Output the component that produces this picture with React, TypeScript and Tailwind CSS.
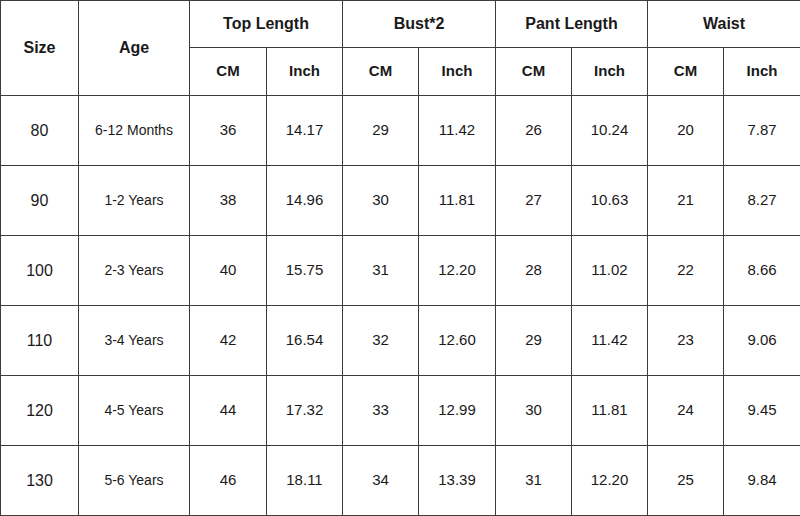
const rows = [
  { size: "80", age: "6-12 Months", vals: ["36", "14.17", "29", "11.42", "26", "10.24", "20", "7.87"] },
  { size: "90", age: "1-2 Years", vals: ["38", "14.96", "30", "11.81", "27", "10.63", "21", "8.27"] },
  { size: "100", age: "2-3 Years", vals: ["40", "15.75", "31", "12.20", "28", "11.02", "22", "8.66"] },
  { size: "110", age: "3-4 Years", vals: ["42", "16.54", "32", "12.60", "29", "11.42", "23", "9.06"] },
  { size: "120", age: "4-5 Years", vals: ["44", "17.32", "33", "12.99", "30", "11.81", "24", "9.45"] },
  { size: "130", age: "5-6 Years", vals: ["46", "18.11", "34", "13.39", "31", "12.20", "25", "9.84"] },
];

const groups = ["Top Length", "Bust*2", "Pant Length", "Waist"];
const widths = [78, 111, 77, 76, 76, 77, 76, 76, 76, 77];

const cell = "border border-[#3c3c3c] text-center align-middle p-0";

export default function App() {
  return (
    <div className="w-[800px] h-[516px] bg-white text-[#1a1a1a] font-['Liberation_Sans',Arial,sans-serif] overflow-hidden">
      <table className="w-[800px] table-fixed border-collapse">
        <colgroup>
          {widths.map((w, i) => (
            <col key={i} style={{ width: w }} />
          ))}
        </colgroup>
        <thead>
          <tr className="h-[47px]">
            <th rowSpan={2} className={`${cell} text-[16px] font-bold`}>
              Size
            </th>
            <th rowSpan={2} className={`${cell} text-[16px] font-bold`}>
              Age
            </th>
            {groups.map((g) => (
              <th key={g} colSpan={2} className={`${cell} text-[16px] font-bold`}>
                {g}
              </th>
            ))}
          </tr>
          <tr className="h-[48px]">
            {groups.map((g) => [
              <th key={g + "cm"} className={`${cell} text-[15px] font-bold`}>
                CM
              </th>,
              <th key={g + "in"} className={`${cell} text-[15px] font-bold`}>
                Inch
              </th>,
            ])}
          </tr>
        </thead>
        <tbody>
          {rows.map((r) => (
            <tr key={r.size} className="h-[70px]">
              <td className={`${cell} text-[16px]`}>{r.size}</td>
              <td className={`${cell} text-[14px]`}>{r.age}</td>
              {r.vals.map((v, i) => (
                <td key={i} className={`${cell} text-[15px]`}>
                  {v}
                </td>
              ))}
            </tr>
          ))}
        </tbody>
      </table>
    </div>
  );
}
